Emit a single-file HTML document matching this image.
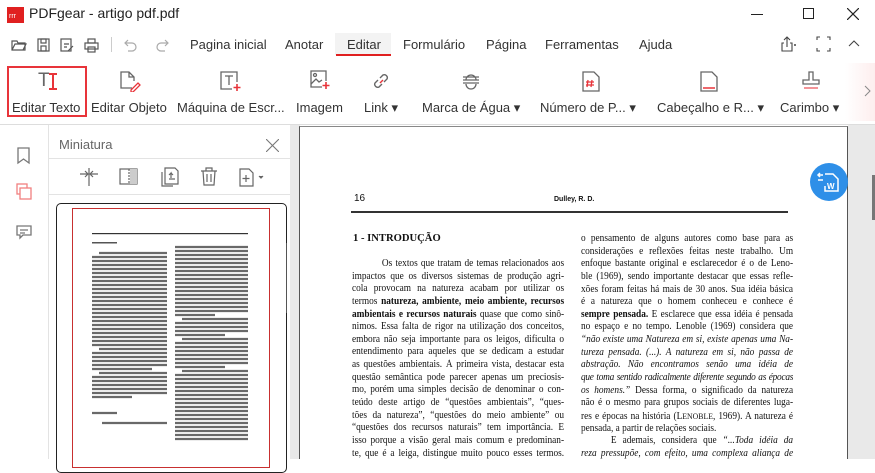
<!DOCTYPE html>
<html><head><meta charset="utf-8"><style>
*{margin:0;padding:0;box-sizing:border-box}
body{width:875px;height:459px;overflow:hidden;background:#fff;font-family:"Liberation Sans","Noto Sans CJK SC",sans-serif;color:#333;position:relative}
.a{position:absolute}
.menu{font-size:13px;color:#333;top:37px}
.tb{font-size:13px;color:#333;top:100px;white-space:nowrap}
.ic{position:absolute}
.doc{font-family:"Liberation Serif",serif;font-size:10.6px;color:#111;line-height:12.65px}
.col{position:absolute;width:241px;transform:scaleX(0.88);transform-origin:0 0}
.col div{text-align:justify;text-align-last:justify;height:12.65px;overflow:hidden;white-space:normal}
.col div.l{text-align-last:left}
.ind{padding-left:34px}
</style></head><body>
<svg class="a" style="left:7px;top:7px" width="17" height="16"><rect width="17" height="16" fill="#e02020"/><text x="2" y="11" font-size="7" fill="#fff" font-family="Liberation Sans">rrr</text></svg>
<div class="a" style="left:29px;top:5px;font-size:14px;color:#222">PDFgear - artigo pdf.pdf</div>
<div class="a" style="left:751px;top:14px;width:12px;height:1px;background:#222"></div>
<div class="a" style="left:803px;top:8px;width:11px;height:11px;border:1px solid #222"></div>
<svg class="a" style="left:847px;top:8px" width="12" height="12"><path d="M0 0L12 12M12 0L0 12" stroke="#222" stroke-width="1.2"/></svg>
<svg class="a" style="left:11px;top:37px" width="90" height="16" fill="none" stroke="#555" stroke-width="1.2">
<path d="M1 4h5l1 2h7v7H1z M1 13l3-6h11l-3 6"/>
<rect x="27" y="2" width="11" height="12"/><rect x="30" y="2" width="5" height="4"/><rect x="30" y="9" width="5" height="5"/>
<rect x="50" y="2" width="10" height="12"/><path d="M53 7h5M53 10h3M57 14l5-5"/>
<rect x="74" y="6" width="13" height="6"/><rect x="77" y="2" width="7" height="4"/><rect x="77" y="10" width="7" height="5"/>
</svg>
<div class="a" style="left:111px;top:37px;width:1px;height:15px;background:#ccc"></div>
<svg class="a" style="left:124px;top:38px" width="45" height="14" fill="none" stroke="#aaa" stroke-width="1.2"><path d="M4 2L1 5l3 3M1 5h7a4 4 0 010 8H4"/><path d="M41 2l3 3-3 3M44 5h-7a4 4 0 000 8h4"/></svg>
<div class="a" style="left:335px;top:33px;width:56px;height:22px;background:#f3f3f3"></div>
<div class="a" style="left:336px;top:54px;width:55px;height:2px;background:#e02020"></div>
<div class="a menu" style="left:190px">Pagina inicial</div>
<div class="a menu" style="left:285px">Anotar</div>
<div class="a menu" style="left:347px">Editar</div>
<div class="a menu" style="left:403px">Formulário</div>
<div class="a menu" style="left:486px">Página</div>
<div class="a menu" style="left:545px">Ferramentas</div>
<div class="a menu" style="left:639px">Ajuda</div>
<svg class="a" style="left:781px;top:36px" width="90" height="16" fill="none" stroke="#444" stroke-width="1.1"><path d="M3 7H1v8h10V7H9M6 11V1M3 4l3-3 3 3"/><path d="M13 9l2 0" stroke-width="1.5"/><path d="M36 4V1h3M46 1h3v3M49 12v3h-3M39 15h-3v-3"/><path d="M68 10l5-5 5 5"/></svg>
<div class="a" style="left:7px;top:66px;width:80px;height:51px;border:2px solid #e8343a"></div>
<div class="a" style="left:38px;top:70px;font-size:19px;color:#666;font-family:'Liberation Sans'">T</div>
<div class="a" style="left:52px;top:73px;width:2px;height:16px;background:#e8343a"></div>
<div class="a" style="left:49px;top:73px;width:8px;height:1.5px;background:#e8343a"></div>
<div class="a" style="left:49px;top:88px;width:8px;height:1.5px;background:#e8343a"></div>
<svg class="ic" style="left:118px;top:70px" width="24" height="22" fill="none" stroke="#666" stroke-width="1.3"><path d="M14 18H3V2h8l5 5v4M11 2v5h5"/><path d="M13 20l7-7 2 2-7 7h-2z" stroke="#e8343a"/></svg>
<svg class="ic" style="left:218px;top:70px" width="24" height="22" fill="none" stroke="#666" stroke-width="1.3"><path d="M14 19H3V2h16v10"/><path d="M7 6h8M11 6v9"/><path d="M19 14v7M15.5 17.5h7" stroke="#e8343a" stroke-width="1.6"/></svg>
<svg class="ic" style="left:308px;top:69px" width="24" height="22" fill="none" stroke="#666" stroke-width="1.3"><path d="M14 18H3V2h15v10"/><circle cx="7" cy="6" r="1.5"/><path d="M3 15l5-5 3 3 3-2"/><path d="M18 13v7M14.5 16.5h7" stroke="#e8343a" stroke-width="1.6"/></svg>
<svg class="ic" style="left:372px;top:72px" width="20" height="18" fill="none" stroke="#666" stroke-width="1.4"><path d="M8 6l3-3a3 3 0 014 4l-3 3M10 12l-3 3a3 3 0 01-4-4l3-3"/><path d="M8 11l3-3" stroke="#e8343a"/></svg>
<svg class="ic" style="left:460px;top:71px" width="22" height="20" fill="none" stroke="#666" stroke-width="1.3"><path d="M3 6h16M3 9h16M3 12h16M6 13a5 5 0 0010 0M6 9a5 5 0 015-5 5 5 0 015 5"/></svg>
<svg class="ic" style="left:581px;top:70px" width="20" height="22" fill="none" stroke="#666" stroke-width="1.3"><path d="M2 2h11l5 5v14H2z"/><path d="M7 10l-1 7M11 10l-1 7M5 12h8M5 15h8" stroke="#e8343a"/></svg>
<svg class="ic" style="left:699px;top:70px" width="20" height="22" fill="none" stroke="#666" stroke-width="1.3"><path d="M2 2h11l5 5v14H2z"/><path d="M4 18h12" stroke="#e8343a" stroke-width="1.5"/></svg>
<svg class="ic" style="left:800px;top:70px" width="22" height="22" fill="none" stroke="#666" stroke-width="1.3"><path d="M9 2h4v8h6v4H3v-4h6z"/><path d="M4 18h14" stroke="#e8343a" stroke-width="1.5" opacity=".7"/></svg>
<div class="a tb" style="left:12px">Editar Texto</div>
<div class="a tb" style="left:91px">Editar Objeto</div>
<div class="a tb" style="left:177px">Máquina de Escr...</div>
<div class="a tb" style="left:296px">Imagem</div>
<div class="a tb" style="left:364px">Link ▾</div>
<div class="a tb" style="left:422px">Marca de Água ▾</div>
<div class="a tb" style="left:540px">Número de P... ▾</div>
<div class="a tb" style="left:657px">Cabeçalho e R... ▾</div>
<div class="a tb" style="left:780px">Carimbo ▾</div>
<div class="a" style="left:845px;top:63px;width:30px;height:58px;background:linear-gradient(90deg,#fff,#fdeeee)"></div>
<svg class="a" style="left:864px;top:85px" width="8" height="12"><path d="M1 1l5 5-5 5" stroke="#888" fill="none"/></svg>
<div class="a" style="left:0;top:124px;width:875px;height:1px;background:#ddd"></div>
<div class="a" style="left:48px;top:125px;width:1px;height:334px;background:#e3e3e3"></div>
<svg class="a" style="left:15px;top:146px" width="20" height="100" fill="none" stroke-width="1.3"><path d="M3 2h11v15l-5.5-4L3 17z" stroke="#777"/><rect x="2" y="38" width="10" height="10" stroke="#f08080"/><rect x="5" y="42" width="11" height="11" stroke="#f08080" fill="#fff"/><path d="M2 80h14v9H8l-3 3v-3H2z M5 84h8M5 87h5" stroke="#777"/></svg>
<div class="a" style="left:59px;top:137px;font-size:13px;color:#666">Miniatura</div>
<svg class="a" style="left:266px;top:139px" width="13" height="13"><path d="M0 0L13 13M13 0L0 13" stroke="#777" stroke-width="1.1"/></svg>
<div class="a" style="left:49px;top:158px;width:241px;height:1px;background:#e3e3e3"></div>
<svg class="a" style="left:78px;top:165px" width="190" height="24" fill="none" stroke="#666" stroke-width="1.2">
<path d="M2 7h8M7 4l3 3-3 3M20 7h-8M15 4l-3 3 3 3M11 1v18" transform="translate(0,2)"/>
<rect x="42" y="4" width="17" height="15"/><path d="M51 4v15" stroke-dasharray="2 1"/><rect x="52" y="4" width="7" height="15" fill="#ccc" stroke="none"/>
<path d="M84 7v14h11M87 3h10l3 3v13H87z M91 14h6M93 13V8l-2 2M93 8l2 2"/>
<path d="M123 6h16M128 6V3h6v3M125 6l1 14h10l1-14M129 9v8M133 9v8"/>
<path d="M162 4h9l4 4v13h-13z M168 10v7M164.5 13.5h7"/><path d="M181 11l2 2 2-2" fill="#666"/>
</svg>
<div class="a" style="left:49px;top:194px;width:241px;height:1px;background:#e3e3e3"></div>
<div class="a" style="left:56px;top:203px;width:231px;height:270px;border:1px solid #222;border-radius:5px"></div>
<div class="a" style="left:72px;top:208px;width:198px;height:260px;border:1px solid #c83030"></div>
<div class="a" style="left:286px;top:243px;width:1px;height:70px;background:#555"></div>
<svg class="a" style="left:90px;top:230px" width="160" height="230">
<rect x="2" y="3" width="156" height="1.2" fill="#333"/>
<g fill="#555">
<rect x="2" y="12" width="25" height="1.5"/>
</g>
<g stroke="#444" stroke-width="2.2" opacity=".8">
<path d="M9 23h68M2 27h75M2 31h75M2 35h75M2 39h75M2 43h75M2 47h75M2 51h75M2 55h75M2 59h75M2 63h75M2 67h75M2 71h75M2 75h75M2 79h75M2 83h75M2 87h75M2 91h75M2 95h75M2 99h75M2 103h75M2 107h75M2 111h75M2 115h75M9 119h68M2 123h75M2 127h75M2 131h75M2 135h75M2 139h60M9 143h68M2 147h75M2 151h75M2 155h75M2 159h75M2 163h75M2 167h40"/>
<path d="M85 17h73M85 21h73M85 25h73M85 29h73M85 33h73M85 37h73M85 41h73M85 45h73M85 49h73M85 53h73M85 57h73M85 61h73M85 65h73M85 69h73M85 73h73M85 77h73M85 81h73M85 85h40M92 89h66M85 93h73M85 97h73M85 101h73M85 105h50M92 109h66M85 113h73M85 117h73M85 121h73M85 125h73M85 129h73M85 133h73M85 137h50M92 141h66M85 145h73M85 149h73M85 153h73M85 157h73M85 161h73M85 165h73M85 169h73M85 173h73M85 177h73M85 181h73M85 185h73M85 189h73M85 193h73M85 197h73M85 201h73M85 205h73M85 209h73"/>
<path d="M2 183h25M12 193h65"/>
</g></svg>
<div class="a" style="left:290px;top:125px;width:10px;height:334px;background:#e9e9e9"></div>
<div class="a" style="left:848px;top:125px;width:27px;height:334px;background:#e9e9e9"></div>
<div class="a" style="left:872px;top:175px;width:3px;height:45px;background:#777"></div>
<div class="a" style="left:299px;top:126px;width:549px;height:333px;background:#fff;border-left:1px solid #555;border-right:1px solid #555;border-top:1px solid #888"></div>
<div class="a" style="left:810px;top:163px;width:38px;height:38px;border-radius:50%;background:#2e8fe8"></div>
<svg class="a" style="left:816px;top:170px" width="28" height="25" fill="none" stroke="#fff" stroke-width="1.5"><path d="M2 5h5M2 10h5M4 3l-2 2 2 2"/><path d="M9 4h8l5 5v12H9v-5"/><text x="11" y="19" font-size="8" fill="#fff" stroke="none" font-family="Liberation Sans" font-weight="bold">W</text></svg>
<div class="a doc" style="left:354px;top:193px;font-family:'Liberation Sans';font-size:10px">16</div>
<div class="a doc" style="left:554px;top:194px;font-family:'Liberation Sans';font-size:7px;font-weight:bold">Dulley, R. D.</div>
<div class="a" style="left:351px;top:211px;width:437px;height:1.5px;background:#333"></div>
<div class="a doc" style="left:353px;top:233px;font-weight:bold">1 - INTRODUÇÃO</div>
<div class="col doc" style="left:352px;top:258px">
<div class="ind">Os textos que tratam de temas relacionados aos</div>
<div>impactos que os diversos sistemas de produção agri-</div>
<div>cola provocam na natureza acabam por utilizar os</div>
<div>termos <b>natureza, ambiente, meio ambiente, recursos</b></div>
<div><b>ambientais e recursos naturais</b> quase que como sinô-</div>
<div>nimos. Essa falta de rigor na utilização dos conceitos,</div>
<div>embora não seja importante para os leigos, dificulta o</div>
<div>entendimento para aqueles que se dedicam a estudar</div>
<div>as questões ambientais. À primeira vista, destacar esta</div>
<div>questão semântica pode parecer apenas um preciosis-</div>
<div>mo, porém uma simples decisão de denominar o con-</div>
<div>teúdo deste artigo de “questões ambientais”, “ques-</div>
<div>tões da natureza”, “questões do meio ambiente” ou</div>
<div>“questões dos recursos naturais” tem importância. E</div>
<div>isso porque a visão geral mais comum e predominan-</div>
<div>te, que é a leiga, distingue muito pouco esses termos.</div>
</div>
<div class="col doc" style="left:581px;top:233px">
<div>o pensamento de alguns autores como base para as</div>
<div>considerações e reflexões feitas neste trabalho. Um</div>
<div>enfoque bastante original e esclarecedor é o de Leno-</div>
<div>ble (1969), sendo importante destacar que essas refle-</div>
<div>xões foram feitas há mais de 30 anos. Sua idéia básica</div>
<div>é a natureza que o homem conheceu e conhece é</div>
<div><b>sempre pensada.</b> E esclarece que essa idéia é pensada</div>
<div>no espaço e no tempo. Lenoble (1969) considera que</div>
<div><i>“não existe uma Natureza em si, existe apenas uma Na-</i></div>
<div><i>tureza pensada. (...). A natureza em si, não passa de uma</i></div>
<div><i>abstração. Não encontramos senão uma idéia de natureza</i></div>
<div style="letter-spacing:-0.3px"><i>que toma sentido radicalmente diferente segundo as épocas e</i></div>
<div><i>os homens.”</i> Dessa forma, o significado da natureza</div>
<div>não é o mesmo para grupos sociais de diferentes luga-</div>
<div>res e épocas na história (L<small>ENOBLE</small>, 1969). A natureza é</div>
<div class="l">pensada, a partir de relações sociais.</div>
<div class="ind">E ademais, considera que <i>“...Toda idéia da natu-</i></div>
<div><i>reza pressupõe, com efeito, uma complexa aliança de ele-</i></div>
</div>
</body></html>
